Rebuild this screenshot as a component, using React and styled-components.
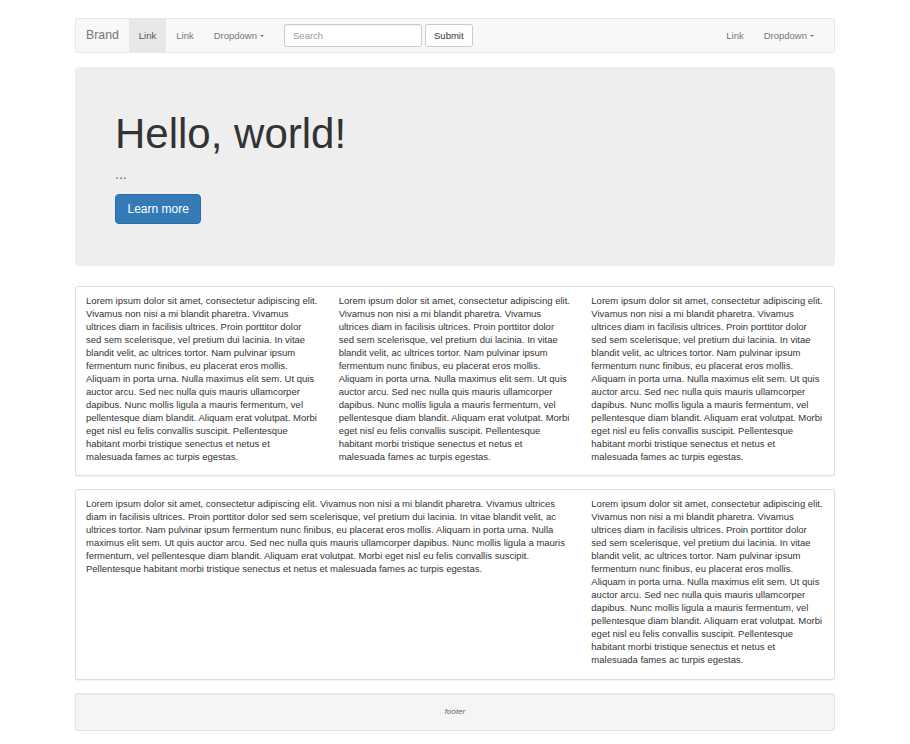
import React from "react";
import styled, { createGlobalStyle } from "styled-components";

const Global = createGlobalStyle`
  html, body { margin: 0; padding: 0; background: #fff; }
  body {
    font-family: "Liberation Sans", Arial, Helvetica, sans-serif;
    font-size: 9.33px;
    line-height: 13px;
    color: #333;
  }
  * { box-sizing: border-box; }
`;

const Container = styled.div`
  width: 760px;
  margin: 18px auto 0;
`;

const Navbar = styled.nav`
  display: flex;
  align-items: stretch;
  height: 35.33px;
  padding: 0 10px;
  background: #f8f8f8;
  border: 1px solid #e7e7e7;
  border-radius: 2.67px;
  margin-bottom: 13.33px;
`;

const Brand = styled.a`
  display: flex;
  align-items: center;
  margin-left: -10px;
  padding: 0 10px;
  font-size: 12.3px;
  color: #777;
  text-decoration: none;
`;

const NavList = styled.div`
  display: flex;
  align-items: stretch;
  margin-left: ${(p) => (p.$right ? "auto" : "0")};
`;

const NavLink = styled.a`
  display: flex;
  align-items: center;
  padding: 0 10px;
  font-size: 9.5px;
  color: ${(p) => (p.$active ? "#555" : "#777")};
  background: ${(p) => (p.$active ? "#e7e7e7" : "transparent")};
  text-decoration: none;
`;

const Caret = styled.span`
  display: inline-block;
  width: 0;
  height: 0;
  margin-left: 3px;
  border-top: 2.67px solid #777;
  border-left: 2.67px solid transparent;
  border-right: 2.67px solid transparent;
  vertical-align: middle;
`;

const Form = styled.form`
  display: flex;
  align-items: center;
  gap: 3.5px;
  padding: 0 10px;
  margin: 0;
`;

const Input = styled.input`
  width: 137.5px;
  height: 22.67px;
  padding: 0 8px;
  font-family: inherit;
  font-size: 9.5px;
  color: #555;
  background: #fff;
  border: 1px solid #ccc;
  border-radius: 2.67px;
  box-shadow: inset 0 1px 1px rgba(0, 0, 0, 0.075);
  outline: none;
  &::placeholder { color: #999; }
`;

const Button = styled.button`
  height: 22.67px;
  padding: 0 8px;
  font-family: inherit;
  font-size: 9.5px;
  color: #333;
  background: #fff;
  border: 1px solid #ccc;
  border-radius: 2.67px;
`;

const Jumbotron = styled.section`
  background: #eee;
  border-radius: 4px;
  padding: 31.5px 40px 31.5px;
  margin-bottom: 20px;
`;

const Title = styled.h1`
  margin: 13.33px 0 6.67px;
  font-size: 42px;
  line-height: 46.2px;
  font-weight: 500;
  color: #333;
`;

const Lead = styled.p`
  margin: 0 0 10px;
  font-size: 14px;
  line-height: 20px;
  font-weight: 200;
  color: #666;
`;

const Actions = styled.div`
  display: flex;
  margin-bottom: 10px;
`;

const PrimaryButton = styled.a`
  display: inline-flex;
  align-items: center;
  height: 30px;
  padding: 0 11.5px;
  font-size: 12px;
  color: #fff;
  background: #337ab7;
  border: 1px solid #2e6da4;
  border-radius: 4px;
  text-decoration: none;
`;

const Panel = styled.div`
  display: grid;
  grid-template-columns: repeat(3, 1fr);
  column-gap: 20px;
  padding: 7px 10px 6px;
  background: #fff;
  border: 1px solid #ddd;
  border-radius: 2.67px;
  box-shadow: 0 1px 1px rgba(0, 0, 0, 0.05);
  margin-bottom: 13px;
`;

const Col = styled.p`
  grid-column: span ${(p) => p.$span || 1};
  margin: 0 0 6.5px;
  font-size: 9.5px;
  line-height: 13px;
`;

const Well = styled.footer`
  padding: 11.5px;
  background: #f5f5f5;
  border: 1px solid #e3e3e3;
  border-radius: 2.67px;
  box-shadow: inset 0 1px 1px rgba(0, 0, 0, 0.05);
  text-align: center;
  line-height: 13.33px;
  margin-bottom: 13.33px;
`;

const FooterText = styled.small`
  font-size: 8px;
  font-style: italic;
  color: #666;
`;

const LOREM =
  "Lorem ipsum dolor sit amet, consectetur adipiscing elit. Vivamus non nisi a mi blandit pharetra. Vivamus ultrices diam in facilisis ultrices. Proin porttitor dolor sed sem scelerisque, vel pretium dui lacinia. In vitae blandit velit, ac ultrices tortor. Nam pulvinar ipsum fermentum nunc finibus, eu placerat eros mollis. Aliquam in porta urna. Nulla maximus elit sem. Ut quis auctor arcu. Sed nec nulla quis mauris ullamcorper dapibus. Nunc mollis ligula a mauris fermentum, vel pellentesque diam blandit. Aliquam erat volutpat. Morbi eget nisl eu felis convallis suscipit. Pellentesque habitant morbi tristique senectus et netus et malesuada fames ac turpis egestas.";

export default function App() {
  return (
    <>
      <Global />
      <Container>
        <Navbar>
          <Brand href="#">Brand</Brand>
          <NavList>
            <NavLink href="#" $active>Link</NavLink>
            <NavLink href="#">Link</NavLink>
            <NavLink href="#">
              Dropdown <Caret />
            </NavLink>
          </NavList>
          <Form onSubmit={(e) => e.preventDefault()}>
            <Input type="text" placeholder="Search" />
            <Button type="submit">Submit</Button>
          </Form>
          <NavList $right>
            <NavLink href="#">Link</NavLink>
            <NavLink href="#">
              Dropdown <Caret />
            </NavLink>
          </NavList>
        </Navbar>

        <Jumbotron>
          <Title>Hello, world!</Title>
          <Lead>...</Lead>
          <Actions>
            <PrimaryButton href="#">Learn more</PrimaryButton>
          </Actions>
        </Jumbotron>

        <Panel>
          <Col>{LOREM}</Col>
          <Col>{LOREM}</Col>
          <Col>{LOREM}</Col>
        </Panel>

        <Panel>
          <Col $span={2}>{LOREM}</Col>
          <Col>{LOREM}</Col>
        </Panel>

        <Well>
          <FooterText>footer</FooterText>
        </Well>
      </Container>
    </>
  );
}
